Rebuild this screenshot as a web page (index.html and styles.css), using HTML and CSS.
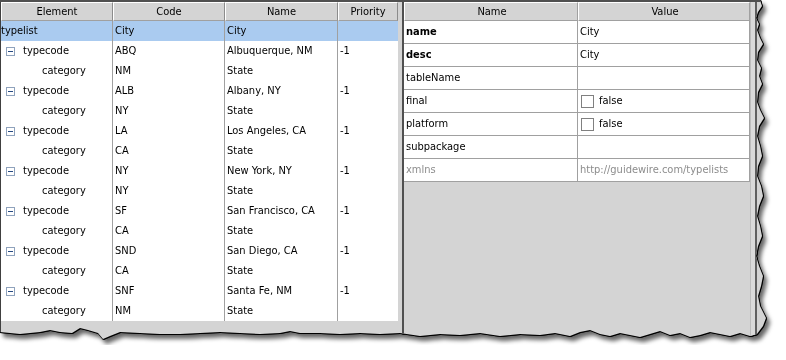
FILE: index.html
```html
<!DOCTYPE html>
<html lang="en">
<head>
    <meta charset="UTF-8">
    <title>Typelist City</title>
    <link rel="stylesheet" href="styles.css">
</head>
<body>
<div class="shot">
    <div class="frame">
        <div class="tree">
            <div class="row head">
                <div class="cell">Element</div>
                <div class="cell">Code</div>
                <div class="cell">Name</div>
                <div class="cell">Priority</div>
            </div>
            <div class="row selected">
                <div class="cell">typelist</div>
                <div class="cell">City</div>
                <div class="cell">City</div>
                <div class="cell"></div>
            </div>
            <div class="row">
                <div class="cell node"><span class="toggle"></span>typecode</div>
                <div class="cell">ABQ</div>
                <div class="cell">Albuquerque, NM</div>
                <div class="cell">-1</div>
            </div>
            <div class="row">
                <div class="cell leaf">category</div>
                <div class="cell">NM</div>
                <div class="cell">State</div>
                <div class="cell"></div>
            </div>
            <div class="row">
                <div class="cell node"><span class="toggle"></span>typecode</div>
                <div class="cell">ALB</div>
                <div class="cell">Albany, NY</div>
                <div class="cell">-1</div>
            </div>
            <div class="row">
                <div class="cell leaf">category</div>
                <div class="cell">NY</div>
                <div class="cell">State</div>
                <div class="cell"></div>
            </div>
            <div class="row">
                <div class="cell node"><span class="toggle"></span>typecode</div>
                <div class="cell">LA</div>
                <div class="cell">Los Angeles, CA</div>
                <div class="cell">-1</div>
            </div>
            <div class="row">
                <div class="cell leaf">category</div>
                <div class="cell">CA</div>
                <div class="cell">State</div>
                <div class="cell"></div>
            </div>
            <div class="row">
                <div class="cell node"><span class="toggle"></span>typecode</div>
                <div class="cell">NY</div>
                <div class="cell">New York, NY</div>
                <div class="cell">-1</div>
            </div>
            <div class="row">
                <div class="cell leaf">category</div>
                <div class="cell">NY</div>
                <div class="cell">State</div>
                <div class="cell"></div>
            </div>
            <div class="row">
                <div class="cell node"><span class="toggle"></span>typecode</div>
                <div class="cell">SF</div>
                <div class="cell">San Francisco, CA</div>
                <div class="cell">-1</div>
            </div>
            <div class="row">
                <div class="cell leaf">category</div>
                <div class="cell">CA</div>
                <div class="cell">State</div>
                <div class="cell"></div>
            </div>
            <div class="row">
                <div class="cell node"><span class="toggle"></span>typecode</div>
                <div class="cell">SND</div>
                <div class="cell">San Diego, CA</div>
                <div class="cell">-1</div>
            </div>
            <div class="row">
                <div class="cell leaf">category</div>
                <div class="cell">CA</div>
                <div class="cell">State</div>
                <div class="cell"></div>
            </div>
            <div class="row">
                <div class="cell node"><span class="toggle"></span>typecode</div>
                <div class="cell">SNF</div>
                <div class="cell">Santa Fe, NM</div>
                <div class="cell">-1</div>
            </div>
            <div class="row">
                <div class="cell leaf">category</div>
                <div class="cell">NM</div>
                <div class="cell">State</div>
                <div class="cell"></div>
            </div>
        </div>

        <div class="splitter"></div>

        <div class="props">
            <div class="prow head">
                <div class="cell">Name</div>
                <div class="cell">Value</div>
            </div>
            <div class="prow">
                <div class="cell bold">name</div>
                <div class="cell">City</div>
            </div>
            <div class="prow">
                <div class="cell bold">desc</div>
                <div class="cell">City</div>
            </div>
            <div class="prow">
                <div class="cell">tableName</div>
                <div class="cell"></div>
            </div>
            <div class="prow">
                <div class="cell">final</div>
                <div class="cell"><span class="check"></span>false</div>
            </div>
            <div class="prow">
                <div class="cell">platform</div>
                <div class="cell"><span class="check"></span>false</div>
            </div>
            <div class="prow">
                <div class="cell">subpackage</div>
                <div class="cell"></div>
            </div>
            <div class="prow muted">
                <div class="cell">xmlns</div>
                <div class="cell">http://guidewire.com/typelists</div>
            </div>
        </div>

        <div class="edge"></div>
    </div>
</div>
</body>
</html>
```

FILE: styles.css
```css
body {
    margin: 0;
    background: #ffffff;
    font-family: "DejaVu Sans Condensed", "Liberation Sans", Arial, sans-serif;
    font-size: 11px;
    color: #000;
}
.shot {
    width: 772px;
    height: 345px;
    filter: drop-shadow(1px 0 0 #000) drop-shadow(0 1px 0 #000) drop-shadow(3px 4px 2px rgba(0, 0, 0, 0.6));
}
.frame {
    display: flex;
    width: 770px;
    height: 342px;
    background: #d4d4d4;
    border-top: 2px solid #505050;
    box-sizing: border-box;
    clip-path: polygon(0 0, 760px 0, 762px 6px, 758px 12px, 756px 18px, 759px 24px, 757px 30px, 760px 38px, 763px 44px, 758px 52px, 757px 60px, 761px 68px, 759px 76px, 762px 84px, 758px 92px, 757px 102px, 760px 110px, 764px 118px, 759px 126px, 757px 136px, 760px 146px, 762px 156px, 758px 166px, 757px 176px, 761px 186px, 763px 196px, 759px 206px, 757px 216px, 760px 226px, 762px 236px, 758px 246px, 756px 256px, 759px 266px, 763px 276px, 761px 286px, 758px 296px, 760px 306px, 764px 314px, 766px 318px, 763px 326px, 757px 334px, 750px 336px, 740px 333px, 730px 336px, 720px 334px, 710px 332px, 700px 335px, 690px 337px, 680px 333px, 670px 335px, 660px 331px, 650px 334px, 640px 337px, 630px 335px, 620px 333px, 610px 336px, 600px 334px, 590px 330px, 580px 332px, 570px 336px, 555px 333px, 540px 335px, 520px 334px, 500px 336px, 480px 333px, 460px 335px, 440px 334px, 420px 336px, 400px 333px, 380px 334px, 360px 333px, 340px 334px, 320px 333px, 300px 333px, 290px 331px, 280px 333px, 260px 334px, 240px 333px, 220px 332px, 200px 333px, 180px 334px, 160px 334px, 140px 333px, 120px 332px, 110px 336px, 103px 339px, 98px 333px, 88px 330px, 80px 328px, 72px 333px, 60px 332px, 50px 330px, 40px 332px, 30px 333px, 20px 334px, 10px 333px, 0 332px);
}

/* left tree table */
.tree {
    width: 398px;
    flex: none;
    border-left: 1px solid #404040;
    box-sizing: border-box;
}
.row {
    display: grid;
    grid-template-columns: 112px 112px 113px 1fr;
    height: 20px;
    background: #fff;
}
.row .cell {
    border-right: 1px solid #a0a0a0;
    padding-left: 2px;
    line-height: 20px;
    white-space: nowrap;
    overflow: hidden;
}
.row .cell:last-child { border-right: none; }
.row.selected { background: #aacbf0; }
.row.selected .cell:first-child { padding-left: 0; }
.row.head {
    height: 19px;
    background: #d4d4d4;
}
.head .cell {
    text-align: center;
    line-height: 17px;
    padding-left: 0;
    border-top: 1px solid #fff;
    border-left: 1px solid #fff;
    border-right: 1px solid #8c8c8c;
    border-bottom: 1px solid #a0a0a0;
}
.row.head .cell:last-child { border-right: 1px solid #8c8c8c; }
.node { display: flex; align-items: center; }
.toggle {
    width: 9px;
    height: 9px;
    margin: 0 8px 0 3px;
    border: 1px solid #8fa2bc;
    box-sizing: border-box;
    background: #fff;
    position: relative;
}
.toggle::after {
    content: "";
    position: absolute;
    left: 1px;
    top: 3px;
    width: 5px;
    height: 1px;
    background: #264a82;
}
.row .leaf { padding-left: 41px; }

.splitter {
    width: 4px;
    flex: none;
}

/* right property sheet */
.props {
    width: 348px;
    flex: none;
    border-left: 2px solid #505050;
    box-sizing: border-box;
}
.prow {
    display: grid;
    grid-template-columns: 174px 172px;
    height: 23px;
    background: #fff;
    border-bottom: 1px solid #a0a0a0;
    box-sizing: border-box;
}
.prow .cell {
    border-right: 1px solid #a0a0a0;
    padding-left: 2px;
    line-height: 22px;
    display: flex;
    align-items: center;
    white-space: nowrap;
}
.prow.head {
    height: 19px;
    background: #d4d4d4;
    border-bottom: none;
}
.prow.head .cell {
    justify-content: center;
    line-height: 17px;
}
.bold { font-weight: bold; }
.muted .cell { color: #8c8c8c; }
.check {
    width: 13px;
    height: 13px;
    box-sizing: border-box;
    border: 1px solid #808080;
    background: #fff;
    margin: 0 5px 0 1px;
}
.edge {
    width: 4px;
    flex: none;
    background: #dadada;
    border-left: 1px solid #bdbdbd;
    border-right: 2px solid #606060;
}
```
